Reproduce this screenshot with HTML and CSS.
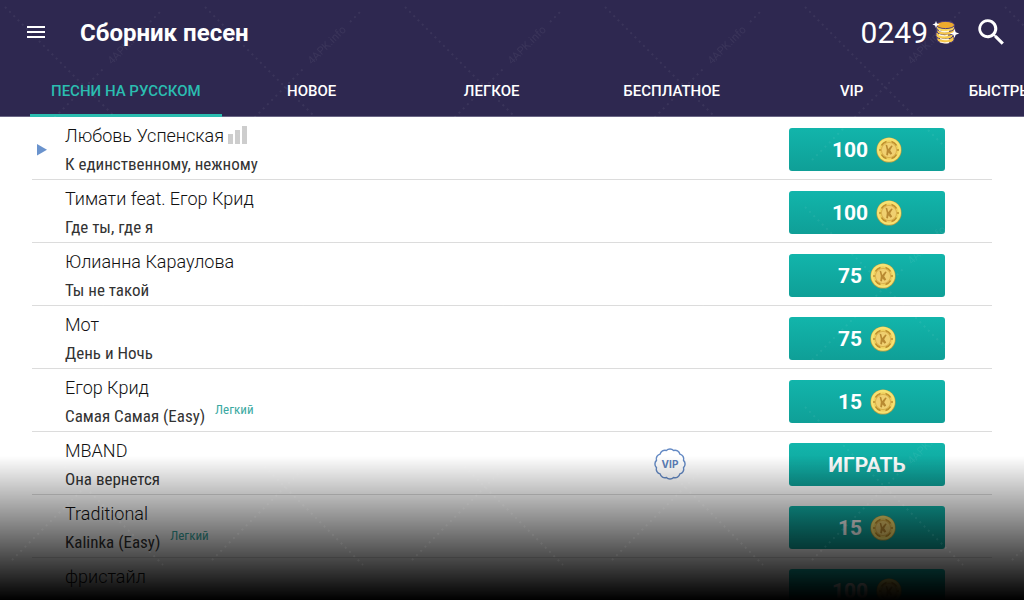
FILE: index.html
```html
<!DOCTYPE html>
<html lang="ru">
<head>
  <meta charset="UTF-8">
  <meta name="viewport" content="width=device-width, initial-scale=1">
  <title>Сборник песен</title>
  <link rel="stylesheet" href="styles.css">
</head>
<body>

  <!-- shared icons -->
  <svg class="sprite" width="0" height="0" aria-hidden="true">
    <symbol id="coin" viewBox="0 0 26 26">
      <circle cx="13" cy="13" r="12.6" fill="#b8a044"/>
      <circle cx="13" cy="12.8" r="12" fill="#f6e272"/>
      <circle cx="13" cy="13" r="9.800" fill="#efd05f"/>
      <path d="M5.500 8.500a9 9 0 0 1 5-4M15.500 4.500a9 9 0 0 1 5 4M20.500 17.500a9 9 0 0 1-5 4M10.500 21.500a9 9 0 0 1-5-4" fill="none" stroke="#bd8f2f" stroke-width="1.500"/>
      <circle cx="4" cy="13" r="1" fill="#bd8f2f"/>
      <circle cx="22" cy="13" r="1" fill="#bd8f2f"/>
      <circle cx="13" cy="13" r="7.600" fill="#f0d070" stroke="#d4aa45" stroke-width=".8"/>
      <path d="M9.500 7.500l1.800.8.900 3.700 3.200-3.600 1.300.6-2.500 4.200 2 3.400-1.500 1.200-2.200-2.200-.6 3-1.700-.5.600-5z" fill="#b88a32"/>
    </symbol>
  </svg>

  <header class="header">
    <div class="toolbar">
      <button class="icon-btn menu" aria-label="Меню">
        <svg width="18" height="12" viewBox="0 0 18 12"><path d="M0 0h18v2H0zM0 5h18v2H0zM0 10h18v2H0z" fill="#fff"/></svg>
      </button>
      <h1>Сборник песен</h1>
      <div class="balance">
        <span>0249</span>
        <svg width="28" height="24" viewBox="0 0 28 24" aria-hidden="true">
          <g stroke="#4b3a78" stroke-width="1">
            <path d="M5 16.500v3c0 5 17 5 17 0v-3z" fill="#f6c648"/>
            <path d="M4 12.500v3c0 5 17 5 17 0v-3z" fill="#f9cd4c"/>
            <path d="M5 8.500v3c0 5 18 5 18 0v-3z" fill="#f6c648"/>
            <path d="M4.500 5v3c0 5 18 5 18 0V5z" fill="#fbd75a"/>
            <ellipse cx="13.500" cy="5" rx="9" ry="3.600" fill="#eeaa2d"/>
          </g>
          <path d="M7 10.500c3 1.300 7 1.500 10 .6M7 14.700c3 1.200 7 1.300 9 .5M8 18.600c3 1.200 6 1.300 9 .5M8 22c3 1 6 1 9 .3" fill="none" stroke="#fff6da" stroke-width="1.300"/>
          <path d="M4 1l1 2.600L7.600 4.600 5 5.600 4 8.200 3 5.600.4 4.600 3 3.600z" fill="#fff"/>
          <path d="M22.500 9l1.200 3.200 3.500 1.300-3.500 1.300-1.200 3.200-1.200-3.200-3.500-1.300 3.500-1.300z" fill="#fff"/>
        </svg>
      </div>
      <button class="icon-btn search" aria-label="Поиск">
        <svg width="26" height="26" viewBox="0 0 26 26"><path d="M18.600 16.300h-1.200l-.4-.4a9.500 9.500 0 1 0-1 1l.4.400v1.200l7.300 7.200 2.200-2.200zM9.600 16.300a6.600 6.600 0 1 1 0-13.200 6.600 6.600 0 0 1 0 13.200z" fill="#fff"/></svg>
      </button>
    </div>

    <nav class="tabs">
      <a href="#" class="active">ПЕСНИ НА РУССКОМ</a>
      <a href="#">НОВОЕ</a>
      <a href="#">ЛЕГКОЕ</a>
      <a href="#">БЕСПЛАТНОЕ</a>
      <a href="#">VIP</a>
      <a href="#">БЫСТРЫЕ ПЕСНИ</a>
    </nav>
  </header>

  <main>
    <ul class="songs">
      <li class="song">
        <span class="marker"><svg width="10" height="12" viewBox="0 0 10 12"><path d="M0 0l10 5.700L0 11.400z" fill="#6a93cd"/></svg></span>
        <div class="info">
          <p class="artist">Любовь Успенская <svg class="level" width="19" height="18" viewBox="0 0 19 18"><path d="M0 8h5v10H0zM7 4h5v14H7zM14 0h5v18h-5z" fill="#cdcdcd"/></svg></p>
          <p class="title">К единственному, нежному</p>
        </div>
        <button class="buy">100 <svg class="coin"><use href="#coin"/></svg></button>
      </li>
      <li class="song">
        <span class="marker"></span>
        <div class="info">
          <p class="artist">Тимати feat. Егор Крид</p>
          <p class="title">Где ты, где я</p>
        </div>
        <button class="buy">100 <svg class="coin"><use href="#coin"/></svg></button>
      </li>
      <li class="song">
        <span class="marker"></span>
        <div class="info">
          <p class="artist">Юлианна Караулова</p>
          <p class="title">Ты не такой</p>
        </div>
        <button class="buy">75 <svg class="coin"><use href="#coin"/></svg></button>
      </li>
      <li class="song">
        <span class="marker"></span>
        <div class="info">
          <p class="artist">Мот</p>
          <p class="title">День и Ночь</p>
        </div>
        <button class="buy">75 <svg class="coin"><use href="#coin"/></svg></button>
      </li>
      <li class="song">
        <span class="marker"></span>
        <div class="info">
          <p class="artist">Егор Крид</p>
          <p class="title">Самая Самая (Easy) <span class="easy">Легкий</span></p>
        </div>
        <button class="buy">15 <svg class="coin"><use href="#coin"/></svg></button>
      </li>
      <li class="song">
        <span class="marker"></span>
        <div class="info">
          <p class="artist">MBAND</p>
          <p class="title">Она вернется</p>
        </div>
        <svg class="vip" width="32" height="32" viewBox="0 0 32 32">
          <path d="M12.380 2.480A5 5 0 0 1 19.620 2.480A5 5 0 0 1 25.900 6.100A5 5 0 0 1 29.520 12.380A5 5 0 0 1 29.520 19.620A5 5 0 0 1 25.900 25.900A5 5 0 0 1 19.620 29.520A5 5 0 0 1 12.380 29.520A5 5 0 0 1 6.100 25.900A5 5 0 0 1 2.480 19.620A5 5 0 0 1 2.480 12.380A5 5 0 0 1 6.100 6.100A5 5 0 0 1 12.380 2.480z"/>
          <text x="16" y="20">VIP</text>
        </svg>
        <button class="buy">ИГРАТЬ</button>
      </li>
      <li class="song">
        <span class="marker"></span>
        <div class="info">
          <p class="artist">Traditional</p>
          <p class="title">Kalinka (Easy) <span class="easy">Легкий</span></p>
        </div>
        <button class="buy">15 <svg class="coin"><use href="#coin"/></svg></button>
      </li>
      <li class="song">
        <span class="marker"></span>
        <div class="info">
          <p class="artist">фристайл</p>
          <p class="title">О</p>
        </div>
        <button class="buy">100 <svg class="coin"><use href="#coin"/></svg></button>
      </li>
    </ul>
  </main>

  <div class="fade"></div>

  <svg class="watermark" aria-hidden="true">
    <defs>
      <pattern id="mark" width="200" height="200" patternUnits="userSpaceOnUse">
        <path d="M5 7L163 165M12 160L103 69M150 22L160 12"/>
        <text transform="translate(112 65) rotate(-45)">4APK.info</text>
      </pattern>
    </defs>
    <rect width="100%" height="100%" fill="url(#mark)"/>
  </svg>

</body>
</html>
```

FILE: styles.css
```css
* {
  box-sizing: border-box;
}

body {
  margin: 0;
  height: 100vh;
  overflow: hidden;
  font-family: Roboto, sans-serif;
  background: #fff;
  color: #212121;
}

button {
  border: none;
  padding: 0;
  background: none;
  font-family: inherit;
  cursor: pointer;
}

.sprite {
  position: absolute;
}

.header {
  background: #2e2850;
  border-bottom: 1px solid #6a6685;
  color: #fff;
}

.toolbar {
  display: flex;
  align-items: center;
  height: 64px;
  padding: 0 20px 0 27px;
}

.icon-btn svg {
  display: block;
}

h1 {
  flex: 1;
  margin: 0 0 0 35px;
  padding-top: 2px;
  font-size: 24px;
  font-weight: 700;
}

.balance {
  display: flex;
  align-items: center;
  gap: 4px;
  margin-right: 18px;
  font-size: 30px;
  font-weight: 400;
}

.tabs {
  display: flex;
  height: 53px;
  margin-bottom: -1px;
  padding-left: 30px;
  overflow: hidden;
}

.tabs a {
  flex: none;
  min-width: 180px;
  height: 53px;
  padding: 0 21px;
  border-bottom: 3px solid transparent;
  color: #fff;
  font-size: 15px;
  font-weight: 500;
  line-height: 54px;
  text-align: center;
  text-decoration: none;
  white-space: nowrap;
}

.tabs .active {
  border-color: #2bbdb0;
  color: #2bbdb0;
}

.songs {
  margin: 0 32px;
  padding: 0;
  list-style: none;
}

.song {
  display: flex;
  align-items: center;
  height: 63px;
  padding: 2px 47px 0 5px;
  border-bottom: 1px solid #dcdcdc;
}

.marker {
  width: 28px;
  padding-top: 2px;
}

.info {
  flex: 1;
  padding-top: 2px;
}

.info p {
  margin: 0;
  line-height: 28px;
  white-space: nowrap;
}

.artist {
  font-size: 18px;
  font-weight: 300;
  color: #111;
}

.level {
  vertical-align: -2px;
}

.title {
  font-family: "Roboto Condensed", Roboto, sans-serif;
  font-size: 17px;
  font-weight: 400;
  color: #333;
}

.easy {
  margin-left: 6px;
  font-size: 13px;
  color: #3aa9a2;
  vertical-align: 8px;
  line-height: 1;
}

.vip {
  margin-right: 103px;
}

.vip path {
  fill: none;
  stroke: #6389c4;
  stroke-width: 1.4px;
}

.vip text {
  fill: #5c80ba;
  font-family: Inter, sans-serif;
  font-size: 10px;
  font-weight: 700;
  text-anchor: middle;
}

.buy {
  display: flex;
  align-items: center;
  justify-content: center;
  gap: 8px;
  width: 156px;
  height: 43px;
  padding-top: 2px;
  border-radius: 3px;
  background: linear-gradient(#12b5ab, #0f9f97);
  color: #fff;
  font-size: 21px;
  font-weight: 700;
}

.coin {
  width: 26px;
  height: 26px;
}

.fade {
  position: fixed;
  left: 0;
  right: 0;
  bottom: 0;
  height: 144px;
  background: linear-gradient(transparent, #000);
  pointer-events: none;
}

.watermark {
  position: fixed;
  top: 0;
  left: 0;
  width: 100%;
  height: 100%;
  opacity: 0.06;
  pointer-events: none;
}

.watermark path {
  fill: none;
  stroke: #fff;
  stroke-width: 2px;
  stroke-dasharray: 2 4;
}

.watermark text {
  fill: #fff;
  font-size: 11px;
}
```
